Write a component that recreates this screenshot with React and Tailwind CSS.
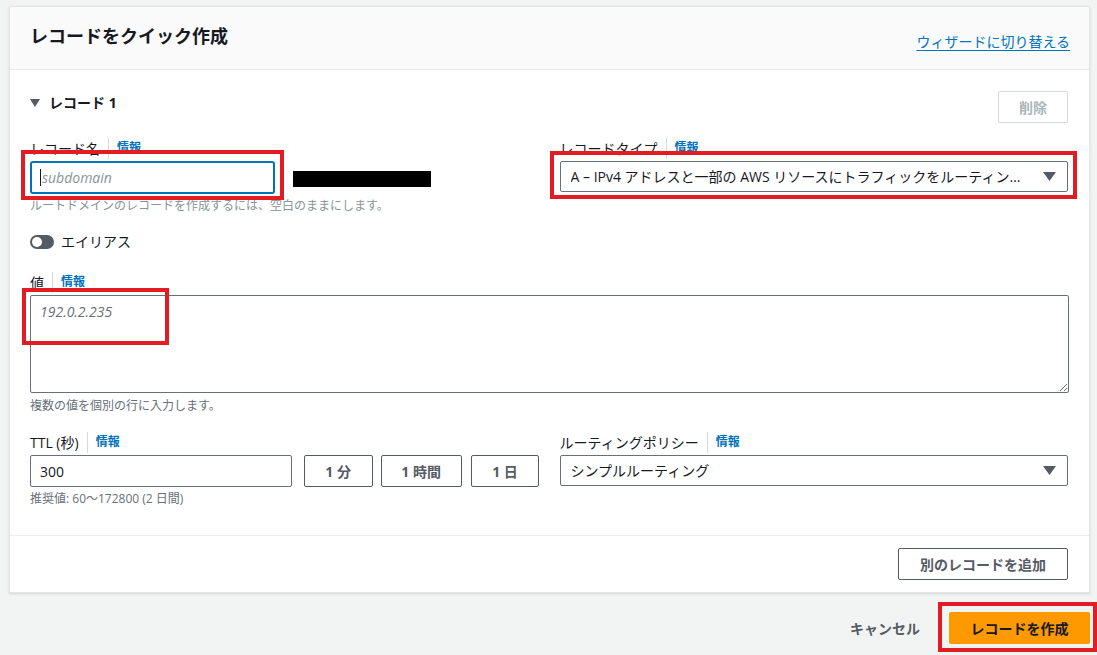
import React from 'react';

const font = { fontFamily: '"Open Sans", "Noto Sans CJK JP", sans-serif' };

function Label({ text }) {
  return (
    <div className="flex items-center h-[20px] mb-[3px] text-[14px] text-[#16191f]">
      <span className="pr-[8px] border-r border-[#d5dbdb]">{text}</span>
      <span className="pl-[8px] text-[12px] font-bold text-[#0073bb]">情報</span>
    </div>
  );
}

function RedBox({ className }) {
  return <div className={'absolute border-[4px] border-[#e31b23] pointer-events-none ' + className} />;
}

function Triangle() {
  return (
    <svg width="13" height="9" viewBox="0 0 13 9">
      <path d="M0 0 H13 L6.5 9 Z" fill="#545b64" />
    </svg>
  );
}

function Select({ value }) {
  return (
    <div className="flex items-center justify-between h-[31px] px-[10px] border border-[#687078] rounded-[2px] bg-white text-[14px] text-[#16191f]">
      <span className="truncate">{value}</span>
      <span className="ml-[12px] shrink-0 pr-[1px]"><Triangle /></span>
    </div>
  );
}

export default function App() {
  return (
    <div className="min-h-[655px] bg-[#f2f3f3] pl-[9px] pr-[7px] pt-[6px]" style={font}>
      {/* card */}
      <div className="bg-white border border-[#e3e6e6] shadow-sm">
        <div className="flex items-center justify-between h-[63px] px-[20px] bg-[#fafafa] border-b border-[#eaeded]">
          <h1 className="text-[18px] font-bold text-[#16191f] mb-[3px]">レコードをクイック作成</h1>
          <a className="text-[14px] text-[#0073bb] underline underline-offset-[3px] mt-[7px] mr-[-1px]">ウィザードに切り替える</a>
        </div>

        <div className="px-[20px] pt-[21px] pb-[27px]">
          <div className="flex items-start justify-between">
            <div className="flex items-center gap-[9px] text-[14px] font-bold text-[#16191f] mt-[1px]">
              <svg width="10" height="8" viewBox="0 0 10 8"><path d="M0 0 H10 L5 8 Z" fill="#545b64" /></svg>
              <span>レコード 1</span>
            </div>
            <button className="w-[70px] h-[32px] mr-[1px] border border-[#d5dbdb] rounded-[2px] text-[14px] font-bold text-[#aab7b8] bg-white">削除</button>
          </div>

          <div className="grid grid-cols-2 gap-x-[20px] mt-[15px]">
            <div>
              <Label text="レコード名" />
              <div className="flex items-center">
                <div className="relative w-[245px]">
                  <div className="h-[33px] border-[2px] border-[#0073bb] rounded-[3px] flex items-center pl-[8px]">
                    <span className="w-px h-[17px] bg-[#16191f] mr-[1px]" />
                    <span className="text-[14px] italic text-[#879596]">subdomain</span>
                  </div>
                  <RedBox className="left-[-9px] right-[-9px] top-[-11px] bottom-[-6px]" />
                </div>
                <div className="ml-[18px] mt-[2px] w-[138px] h-[16px] bg-black" />
              </div>
              <p className="mt-[3px] text-[12px] text-[#879596]">ルートドメインのレコードを作成するには、空白のままにします。</p>
              <div className="flex items-center gap-[7px] mt-[16px] text-[14px] text-[#16191f]">
                <div className="w-[24px] h-[14px] rounded-full bg-[#545b64] flex items-center pl-[2px]">
                  <div className="w-[10px] h-[10px] rounded-full bg-white" />
                </div>
                <span>エイリアス</span>
              </div>
            </div>
            <div>
              <Label text="レコードタイプ" />
              <div className="relative mr-[1px]">
                <Select value="A – IPv4 アドレスと一部の AWS リソースにトラフィックをルーティングします" />
                <RedBox className="left-[-10px] right-[-9px] top-[-10px] bottom-[-7px]" />
              </div>
            </div>
          </div>

          <div className="mt-[20px]">
            <Label text="値" />
            <div className="relative">
              <textarea
                readOnly
                placeholder="192.0.2.235"
                className="block w-full h-[98px] border border-[#687078] rounded-[2px] px-[9px] pt-[5px] text-[14px] italic placeholder:text-[#687078] outline-none"
              />
              <RedBox className="left-[-8px] top-[-7px] w-[147px] h-[57px]" />
            </div>
            <p className="mt-[4px] text-[12px] text-[#687078]">複数の値を個別の行に入力します。</p>
          </div>

          <div className="grid grid-cols-2 gap-x-[20px] mt-[17px]">
            <div>
              <Label text="TTL (秒)" />
              <div className="flex items-center">
                <div className="w-[262px] h-[32px] border border-[#687078] rounded-[2px] flex items-center px-[9px] text-[14px] text-[#16191f]">300</div>
                <button className="ml-[12px] w-[69px] h-[32px] border border-[#545b64] rounded-[2px] text-[14px] font-bold text-[#545b64]">1 分</button>
                <button className="ml-[8px] w-[81px] h-[32px] border border-[#545b64] rounded-[2px] text-[14px] font-bold text-[#545b64]">1 時間</button>
                <button className="ml-[9px] w-[69px] h-[32px] border border-[#545b64] rounded-[2px] text-[14px] font-bold text-[#545b64]">1 日</button>
              </div>
              <p className="mt-[3px] text-[12px] text-[#687078]">推奨値: 60〜172800 (2 日間)</p>
            </div>
            <div>
              <Label text="ルーティングポリシー" />
              <div className="mr-[1px]">
                <Select value="シンプルルーティング" />
              </div>
            </div>
          </div>
        </div>

        <div className="border-t border-[#eaeded] flex justify-end px-[20px] pt-[12px] pb-[12px]">
          <button className="w-[170px] h-[32px] mr-[1px] border border-[#545b64] rounded-[2px] text-[14px] font-bold text-[#545b64] bg-white">別のレコードを追加</button>
        </div>
      </div>

      <div className="flex items-center justify-end mt-[19px]">
        <button className="text-[14px] font-bold text-[#545b64] mr-[29px]">キャンセル</button>
        <div className="relative">
          <button className="w-[141px] h-[32px] bg-[#ff9900] rounded-[2px] text-[14px] font-bold text-[#16191f]">レコードを作成</button>
          <RedBox className="left-[-11px] right-[-7px] top-[-10px] bottom-[-8px]" />
        </div>
      </div>
    </div>
  );
}
